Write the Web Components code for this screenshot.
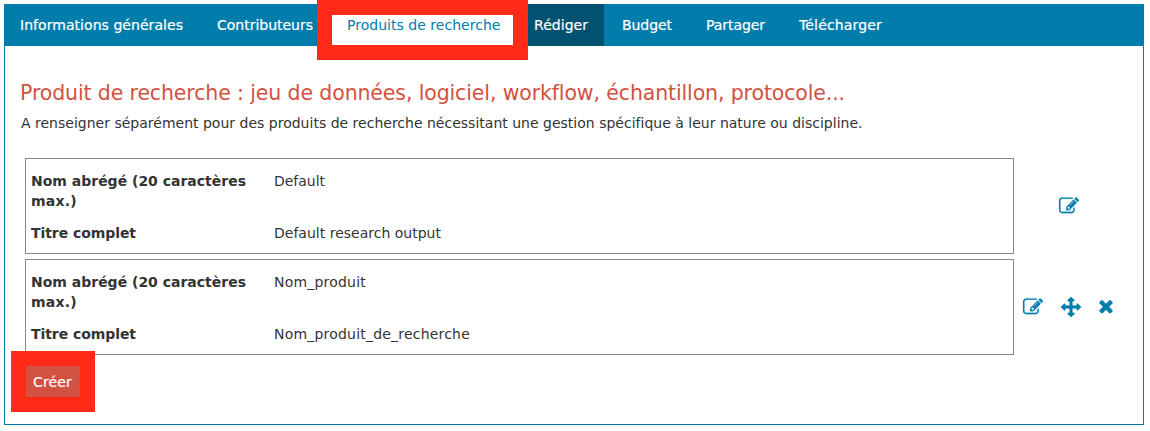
<!DOCTYPE html>
<html lang="fr"><head><meta charset="utf-8"><title>Produits de recherche</title>
<style>
body{margin:0;background:#fff;color:#333;font:14px/20px "DejaVu Sans",Verdana,sans-serif}
</style></head><body>
<plan-page></plan-page>
<script>
const define=(name,html,init)=>customElements.define(name,class extends HTMLElement{
  connectedCallback(){
    if(this.shadowRoot)return;
    const t=document.createElement('template');t.innerHTML=html;
    this.attachShadow({mode:'open'}).append(t.content.cloneNode(true));
    if(init)init(this,this.shadowRoot);
  }
});

// A line of text whose tracking is adjusted to a given advance width.
define('fit-text','<style>:host{display:inline-block;white-space:nowrap}span{display:inline-block}</style><span><slot></slot></span>',(el,root)=>{
  const s=root.querySelector('span'),w=+el.getAttribute('w');
  const gap=(w-s.getBoundingClientRect().width)/el.textContent.length;
  s.style.letterSpacing=gap+'px';
});

const paths={
edit:'M888 1184l116-116-152-152-116 116v56h96v96h56zm440-720q-16-16-33 1l-350 350q-17 17-1 33t33-1l350-350q17-17 1-33zm80 594v190q0 119-84.5 203.5t-203.5 84.5h-832q-119 0-203.5-84.5t-84.5-203.5v-832q0-119 84.5-203.5t203.5-84.5h832q63 0 117 25 15 7 18 23 3 17-9 29l-49 49q-14 14-32 8-23-6-45-6h-832q-66 0-113 47t-47 113v832q0 66 47 113t113 47h832q66 0 113-47t47-113v-126q0-13 9-22l64-64q15-15 35-7t20 29zm-96-738l288 288-672 672h-288v-288zm444 132l-92 92-288-288 92-92q28-28 68-28t68 28l152 152q28 28 28 68t-28 68z',
move:'M1792 896q0 26-19 45l-256 256q-19 19-45 19t-45-19-19-45v-128h-384v384h128q26 0 45 19t19 45-19 45l-256 256q-19 19-45 19t-45-19l-256-256q-19-19-19-45t19-45 45-19h128v-384h-384v128q0 26-19 45t-45 19-45-19l-256-256q-19-19-19-45t19-45l256-256q19-19 45-19t45 19 19 45v128h384v-384h-128q-26 0-45-19t-19-45 19-45l256-256q19-19 45-19t45 19l256 256q19 19 19 45t-19 45-45 19h-128v384h384v-128q0-26 19-45t45-19 45 19l256 256q19 19 19 45z',
times:'M1490 1322q0 40-28 68l-136 136q-28 28-68 28t-68-28l-294-294-294 294q-28 28-68 28t-68-28l-136-136q-28-28-28-68t28-68l294-294-294-294q-28-28-28-68t28-68l136-136q28-28 68-28t68 28l294 294 294-294q28-28 68-28t68 28l136 136q28 28 28 68t-28 68l-294 294 294 294q28 28 28 68z'};
define('fa-icon','<style>:host{display:block;width:20px;height:20px;color:#007dab}svg{display:block;overflow:visible}</style><svg width="20" height="20" viewBox="0 0 1792 1792"><path fill="currentColor" stroke="currentColor" stroke-width="18"/></svg>',(el,root)=>{
  root.querySelector('path').setAttribute('d',paths[el.getAttribute('name')]);
});

define('nav-tab','<style>:host{display:block;box-sizing:border-box;height:42px;padding:11px 0 0 16px;color:#fff;-webkit-text-stroke:.2px}:host([kind=active]){background:#fff;color:#007dab;-webkit-text-stroke:0}:host([kind=dark]){background:#005270}</style><slot></slot>',
 el=>{el.style.width=el.getAttribute('w')+'px'});

define('research-output',`<style>
:host{display:flex;height:96px}
.box{box-sizing:border-box;width:989px;border:1px solid #888;padding:12px 5px 0;display:grid;grid-template-columns:243px 1fr;grid-template-rows:40px 20px;row-gap:12px;align-content:start}
b{font-weight:700}
.actions{display:flex;align-items:flex-start}
</style><div class="box"><b><slot name="label"></slot></b><slot name="short"></slot><b><fit-text w="105">Titre complet</fit-text></b><slot name="full"></slot></div><div class="actions"><slot name="action"></slot></div>`);

define('red-frame','<style>:host{display:block;position:absolute;box-sizing:border-box;border:15px solid #ff2a17}</style>');
define('create-button','<style>:host{display:block;box-sizing:border-box;width:54px;height:31px;padding:6px 0 0 7px;background:#d35141;color:#fff;-webkit-text-stroke:.2px}</style><slot></slot>');

define('plan-page',`<style>
:host{display:block;position:relative;height:431px;padding:4px 0 0 4px;box-sizing:border-box;overflow:hidden}
.panel{box-sizing:border-box;width:1140px;height:421px;border:1px solid #007dab;border-top:0}
nav{display:flex;height:42px;background:#007dab;margin:0 -1px}
h2{margin:35px 0 0 15px;font-size:20.5px;line-height:24px;font-weight:400;color:#d35141}
p{margin:8px 0 25px 16px;height:20px}
.rows{display:flex;flex-direction:column;gap:5px;margin-left:20px}
create-button{margin:11px 0 0 21px}
[slot=short],[slot=full]{display:block}
</style>
<div class="panel">
<nav>
<nav-tab w="197"><fit-text w="163">Informations générales</fit-text></nav-tab>
<nav-tab w="130"><fit-text w="96">Contributeurs</fit-text></nav-tab>
<nav-tab w="187" kind="active"><fit-text w="153.5">Produits de recherche</fit-text></nav-tab>
<nav-tab w="86" kind="dark"><fit-text w="54">Rédiger</fit-text></nav-tab>
<nav-tab w="84" style="padding-left:18px"><fit-text w="50">Budget</fit-text></nav-tab>
<nav-tab w="94" style="padding-left:18px"><fit-text w="59">Partager</fit-text></nav-tab>
<nav-tab w="116" style="padding-left:17px"><fit-text w="83">Télécharger</fit-text></nav-tab>
</nav>
<h2><fit-text w="825">Produit de recherche : jeu de données, logiciel, workflow, échantillon, protocole...</fit-text></h2>
<p><fit-text w="841.5">A renseigner séparément pour des produits de recherche nécessitant une gestion spécifique à leur nature ou discipline.</fit-text></p>
<div class="rows">
<research-output>
<span slot="label"><fit-text w="215">Nom abrégé (20 caractères</fit-text><br><fit-text w="46">max.)</fit-text></span>
<span slot="short"><fit-text w="51">Default</fit-text></span><span slot="full"><fit-text w="167">Default research output</fit-text></span>
<fa-icon slot="action" name="edit" style="margin:37.5px 0 0 44.7px"></fa-icon>
</research-output>
<research-output>
<span slot="label"><fit-text w="215">Nom abrégé (20 caractères</fit-text><br><fit-text w="46">max.)</fit-text></span>
<span slot="short"><fit-text w="92">Nom_produit</fit-text></span><span slot="full"><fit-text w="196">Nom_produit_de_recherche</fit-text></span>
<fa-icon slot="action" name="edit" style="margin:37.5px 0 0 9px"></fa-icon>
<fa-icon slot="action" name="move" style="margin:38px 0 0 17.7px"></fa-icon>
<fa-icon slot="action" name="times" style="margin:36.5px 0 0 15.6px"></fa-icon>
</research-output>
</div>
<create-button><fit-text w="39">Créer</fit-text></create-button>
</div>
<red-frame style="left:317px;top:0;width:211px;height:60px"></red-frame>
<red-frame style="left:11px;top:351px;width:84px;height:61px"></red-frame>`);
</script>
</body></html>
